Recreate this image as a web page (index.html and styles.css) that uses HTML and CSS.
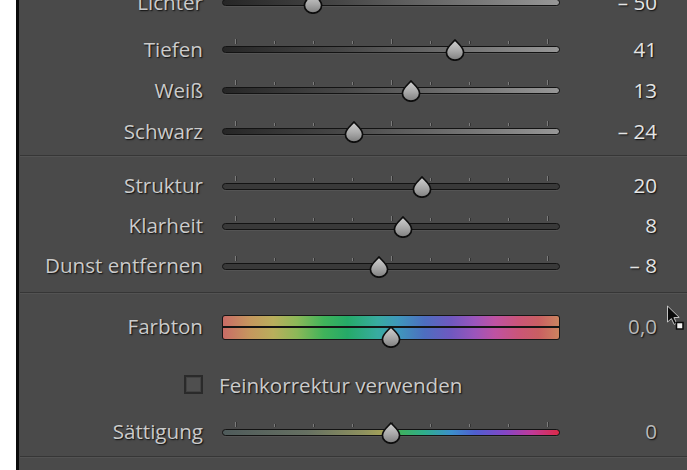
FILE: index.html
```html
<!DOCTYPE html>
<html lang="de">
<head>
<meta charset="utf-8">
<title>Grundeinstellungen</title>
<link rel="stylesheet" href="styles.css">
</head>
<body>
<div class="app">
  <section class="group group-tone">
    <div class="row row-first">
      <span class="label">Lichter</span>
      <div class="slider">
        <div class="ticks"><i class="major"></i><i></i><i></i><i></i><i class="major"></i><i></i><i></i><i></i><i class="major"></i></div>
        <div class="track track-tone"></div>
        <svg class="thumb" style="--p:0.25" viewBox="0 0 20 22" width="20" height="22"><use href="#thumb"/></svg>
      </div>
      <span class="value">– 50</span>
    </div>
    <div class="row">
      <span class="label">Tiefen</span>
      <div class="slider">
        <div class="ticks"><i class="major"></i><i></i><i></i><i></i><i class="major"></i><i></i><i></i><i></i><i class="major"></i></div>
        <div class="track track-tone"></div>
        <svg class="thumb" style="--p:0.705" viewBox="0 0 20 22" width="20" height="22"><use href="#thumb"/></svg>
      </div>
      <span class="value">41</span>
    </div>
    <div class="row">
      <span class="label">Weiß</span>
      <div class="slider">
        <div class="ticks"><i class="major"></i><i></i><i></i><i></i><i class="major"></i><i></i><i></i><i></i><i class="major"></i></div>
        <div class="track track-tone"></div>
        <svg class="thumb" style="--p:0.565" viewBox="0 0 20 22" width="20" height="22"><use href="#thumb"/></svg>
      </div>
      <span class="value">13</span>
    </div>
    <div class="row">
      <span class="label">Schwarz</span>
      <div class="slider">
        <div class="ticks"><i class="major"></i><i></i><i></i><i></i><i class="major"></i><i></i><i></i><i></i><i class="major"></i></div>
        <div class="track track-tone"></div>
        <svg class="thumb" style="--p:0.38" viewBox="0 0 20 22" width="20" height="22"><use href="#thumb"/></svg>
      </div>
      <span class="value">– 24</span>
    </div>
  </section>
  <div class="divider"></div>
  <section class="group group-presence">
    <div class="row row-40">
      <span class="label">Struktur</span>
      <div class="slider">
        <div class="ticks"><i class="major"></i><i></i><i></i><i></i><i class="major"></i><i></i><i></i><i></i><i class="major"></i></div>
        <div class="track"></div>
        <svg class="thumb" style="--p:0.6" viewBox="0 0 20 22" width="20" height="22"><use href="#thumb"/></svg>
      </div>
      <span class="value">20</span>
    </div>
    <div class="row row-40">
      <span class="label">Klarheit</span>
      <div class="slider">
        <div class="ticks"><i class="major"></i><i></i><i></i><i></i><i class="major"></i><i></i><i></i><i></i><i class="major"></i></div>
        <div class="track"></div>
        <svg class="thumb" style="--p:0.54" viewBox="0 0 20 22" width="20" height="22"><use href="#thumb"/></svg>
      </div>
      <span class="value">8</span>
    </div>
    <div class="row row-40">
      <span class="label">Dunst entfernen</span>
      <div class="slider">
        <div class="ticks"><i class="major"></i><i></i><i></i><i></i><i class="major"></i><i></i><i></i><i></i><i class="major"></i></div>
        <div class="track"></div>
        <svg class="thumb" style="--p:0.46" viewBox="0 0 20 22" width="20" height="22"><use href="#thumb"/></svg>
      </div>
      <span class="value">– 8</span>
    </div>
  </section>
  <div class="divider"></div>
  <section class="group group-color">
    <div class="row row-40">
      <span class="label">Farbton</span>
      <div class="hue">
        <div class="hue-half hue-top"></div>
        <div class="hue-half hue-bottom"></div>
        <svg class="thumb thumb-hue" style="--p:0.5" viewBox="0 0 20 22" width="20" height="22"><use href="#thumb"/></svg>
      </div>
      <span class="value value-dim">0,0</span>
    </div>
    <div class="check-row">
      <span class="checkbox"></span>
      <span class="check-label">Feinkorrektur verwenden</span>
    </div>
    <div class="row row-40 row-sat">
      <span class="label">Sättigung</span>
      <div class="slider">
        <div class="ticks"><i class="major"></i><i></i><i></i><i></i><i class="major"></i><i></i><i></i><i></i><i class="major"></i></div>
        <div class="track track-sat"></div>
        <svg class="thumb" style="--p:0.5" viewBox="0 0 20 22" width="20" height="22"><use href="#thumb"/></svg>
      </div>
      <span class="value value-dim">0</span>
    </div>
  </section>
  <div class="divider"></div>

  <svg class="cursor" viewBox="0 0 20 26" width="20" height="26">
    <path d="M1.5 1 L1.5 17 L5.4 13.6 L8.2 19.4 L10.6 18.3 L7.9 12.6 L13.2 12.4 Z" fill="#0a0a0a" stroke="#d4d4d4" stroke-width="0.9" stroke-linejoin="round"/>
    <rect x="10.5" y="17.5" width="6.5" height="6.5" fill="#f0f0f0" stroke="#0a0a0a" stroke-width="1.5"/>
  </svg>

  <svg width="0" height="0" class="defs">
    <defs>
      <linearGradient id="thumbFill" x1="0" y1="0" x2="0" y2="1">
        <stop offset="0" stop-color="#d2d2d2"/>
        <stop offset="0.55" stop-color="#a8a8a8"/>
        <stop offset="1" stop-color="#7e7e7e"/>
      </linearGradient>
      <symbol id="thumb" viewBox="0 0 20 22">
        <path d="M10 0.9 C11.8 3.6 18.6 8 18.6 13.2 A8.6 8 0 0 1 1.4 13.2 C1.4 8 8.2 3.6 10 0.9 Z" fill="url(#thumbFill)" stroke="#0d0d0d" stroke-width="1.7" stroke-linejoin="round"/>
      </symbol>
    </defs>
  </svg>
</div>
</body>
</html>
```

FILE: styles.css
```css
html, body {
  margin: 0;
  padding: 0;
  background: #ffffff;
  width: 687px;
  height: 470px;
  overflow: hidden;
}

.app {
  position: relative;
  margin-left: 16px;
  border-left: 3px solid #0b0b0b;
  background: #4a4a4a;
  height: 470px;
  overflow: hidden;
  font-family: "Open Sans", "Noto Sans", "DejaVu Sans", sans-serif;
  font-size: 20.6px;
  color: #cacaca;
}

.defs {
  position: absolute;
  width: 0;
  height: 0;
}

.group-tone {
  margin-top: -18px;
  padding-bottom: 3px;
}

.group-presence {
  padding-top: 9px;
  padding-bottom: 6px;
}

.group-color {
  padding-top: 13px;
  padding-bottom: 4px;
}

.divider {
  height: 0;
  border-top: 1px solid #363636;
  border-bottom: 1px solid #535353;
  margin-left: 1px;
}

.row {
  display: grid;
  grid-template-columns: 203px 338px 97px;
  align-items: center;
  height: 41px;
}

.row-first {
  margin-bottom: 6px;
}

.row-40 {
  height: 40px;
}

.row-sat {
  margin-top: 8px;
}

.label,
.value {
  line-height: 24px;
  padding-bottom: 2px;
  white-space: nowrap;
  text-shadow: 1px 1px 1.5px rgba(0, 0, 0, 0.85);
}

.label {
  text-align: right;
  padding-right: 19px;
  color: #cbcbcb;
}

.value {
  text-align: right;
  color: #e4e4e4;
}

.value-dim {
  color: #b9b9b9;
}

.slider {
  position: relative;
  display: flex;
  flex-direction: column;
  gap: 2px;
  padding-bottom: 7px;
}

.ticks {
  display: flex;
  justify-content: space-between;
  align-items: flex-end;
  height: 5px;
  padding: 0 12px 0 13px;
}

.ticks i {
  display: block;
  width: 1px;
  height: 3px;
  background: #7c7c7c;
  box-shadow: 1px 0 0 #333333;
}

.ticks i.major {
  height: 5px;
}

.track {
  height: 5px;
  border: 1.5px solid #131313;
  border-radius: 4px;
  background: #393939;
  box-shadow: 0 1px 0 rgba(255, 255, 255, 0.06);
}

.track-tone {
  background: linear-gradient(to right, #262626 0%, #474747 35%, #777777 75%, #979797 100%);
}

.track-sat {
  background: linear-gradient(to right,
    #4f5b5b 0%,
    #667062 25%,
    #8f925f 42%,
    #a9a657 49%,
    #40b05a 52%,
    #2fae8c 60%,
    #3c8fcc 68%,
    #4f5fd0 75%,
    #8546c6 84%,
    #c13a98 92%,
    #dc2a48 100%);
}

.thumb {
  position: absolute;
  top: 0;
  left: calc(3px + 312px * var(--p));
  overflow: visible;
}

.hue {
  position: relative;
  display: flex;
  flex-direction: column;
  height: 23px;
  border: 1px solid #161616;
  border-radius: 3px;
  background: #151515;
  gap: 2px;
  overflow: visible;
}

.hue-half {
  flex: 1;
  background: linear-gradient(to right,
    #c96c66 0%,
    #c5975e 8%,
    #b9ae5c 15%,
    #8cb858 22%,
    #40b35a 30%,
    #25aa68 37%,
    #38aba0 46%,
    #3e98bb 52%,
    #4d6ebf 60%,
    #7058c0 68%,
    #9b55bb 75%,
    #bf52a2 81%,
    #ca5578 88%,
    #c95f62 94%,
    #cb845f 100%);
}

.hue-top {
  border-radius: 2px 2px 0 0;
  flex: 0 0 10px;
}

.hue-bottom {
  border-radius: 0 0 2px 2px;
}

.thumb-hue {
  top: 10px;
  left: calc(2px + 312px * var(--p));
}

.check-row {
  display: flex;
  align-items: center;
  height: 40px;
  margin-top: 17px;
  padding-left: 165px;
  gap: 16px;
}

.checkbox {
  display: block;
  width: 15px;
  height: 15px;
  border: 2px solid #2a2a2a;
  background: #4f4f4f;
  box-shadow: inset 0 0 0 1px #424242;
}

.check-label {
  line-height: 24px;
  padding-top: 1px;
  color: #cbcbcb;
  text-shadow: 1px 1px 1.5px rgba(0, 0, 0, 0.85);
  white-space: nowrap;
}

.cursor {
  position: absolute;
  left: 647px;
  top: 305px;
}
```
